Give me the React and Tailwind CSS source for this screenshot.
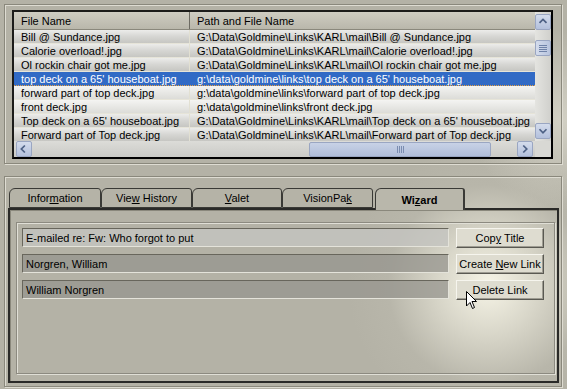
import React from 'react';

const rows = [
  { name: 'Bill @ Sundance.jpg', path: 'G:\\Data\\Goldmine\\Links\\KARL\\mail\\Bill @ Sundance.jpg' },
  { name: 'Calorie overload!.jpg', path: 'G:\\Data\\Goldmine\\Links\\KARL\\mail\\Calorie overload!.jpg' },
  { name: 'Ol rockin chair got me.jpg', path: 'G:\\Data\\Goldmine\\Links\\KARL\\mail\\Ol rockin chair got me.jpg' },
  { name: "top deck on a 65' houseboat.jpg", path: "g:\\data\\goldmine\\links\\top deck on a 65' houseboat.jpg", selected: true },
  { name: 'forward part of top deck.jpg', path: 'g:\\data\\goldmine\\links\\forward part of top deck.jpg' },
  { name: 'front deck.jpg', path: 'g:\\data\\goldmine\\links\\front deck.jpg' },
  { name: "Top deck on a 65' houseboat.jpg", path: "G:\\Data\\Goldmine\\Links\\KARL\\mail\\Top deck on a 65' houseboat.jpg" },
  { name: 'Forward part of Top deck.jpg', path: 'G:\\Data\\Goldmine\\Links\\KARL\\mail\\Forward part of Top deck.jpg' },
];

const ScrollBtn = ({ dir }) => {
  const d = {
    up: 'M4 9 L8 5 L12 9',
    down: 'M4 6 L8 10 L12 6',
    left: 'M9 4 L5 8 L9 12',
    right: 'M6 4 L10 8 L6 12',
  }[dir];
  return (
    <div className="w-[16px] h-[16px] rounded-[2px] border border-[#9aa6c2] bg-gradient-to-b from-[#d4dcec] to-[#b3c0dc] flex items-center justify-center">
      <svg width="16" height="16" viewBox="0 0 16 16">
        <path d={d} fill="none" stroke="#4d6185" strokeWidth="2" />
      </svg>
    </div>
  );
};

const Tab = ({ children, active, w }) => (
  <div
    className={`${w} flex items-center justify-center border border-[#3a3a36] rounded-tl-[6px] rounded-tr-[3px] ${
      active
        ? 'h-[22px] -mb-[2px] border-b-0 border-r-2 bg-[#b9b7ab] font-bold z-10 relative'
        : 'h-[20px] bg-[#b5b3a7] mt-0'
    }`}
  >
    {children}
  </div>
);

const Field = ({ children, light }) => (
  <div
    className={`w-[427px] h-[19px] border border-t-[#68665c] border-l-[#68665c] border-r-[#e4e3da] border-b-[#e4e3da] flex items-center pl-[3px] ${
      light ? 'bg-[rgba(196,196,192,0.8)]' : 'bg-[rgba(150,148,142,0.75)]'
    }`}
  >
    {children}
  </div>
);

const Button = ({ children }) => (
  <div className="w-[88px] h-[20px] flex items-center justify-center bg-[#dedcd0] border border-t-[#f6f5ee] border-l-[#f6f5ee] border-r-[#5a5952] border-b-[#5a5952] shadow-[inset_-1px_-1px_0_#9e9c92]">
    {children}
  </div>
);

export default function App() {
  return (
    <div
      className="w-[567px] h-[389px] pt-[4px] px-[4px] relative overflow-hidden text-[11px] leading-[14px] text-black bg-[#b4b2a6]"
      style={{
        fontFamily: '"Liberation Sans", Arial, sans-serif',
        backgroundImage:
          'radial-gradient(circle at 488px 285px, rgba(250,248,234,0.95) 0px, rgba(240,238,224,0.6) 50px, rgba(200,198,186,0.2) 100px, rgba(180,178,166,0) 140px), radial-gradient(circle at 560px 120px, rgba(240,238,226,0.5) 0px, rgba(180,178,166,0) 90px)',
      }}
    >
      {/* top list frame */}
      <div className="w-[558px] h-[160px] border border-[#8a887c] shadow-[inset_1px_1px_0_#dedcd2,1px_1px_0_#dedcd2] pl-[7px] pt-[5px]">
        <div className="w-[541px] h-[149px] border-2 border-t-[#1c1c1a] border-l-[#1c1c1a] border-r-black border-b-black flex flex-col bg-[#d2d2ce]">
          <div className="flex h-[129px]">
            <div className="w-[521px] h-[129px] overflow-hidden flex flex-col">
              <div className="flex h-[18px] bg-gradient-to-b from-[#cfcdc2] to-[#b9b7ab] border-b border-[#8a887c] shrink-0">
                <div className="w-[176px] pl-[7px] flex items-center border-r border-[#6d6b62]">File Name</div>
                <div className="pl-[7px] flex items-center">Path and File Name</div>
              </div>
              {rows.map((r, i) => (
                <div
                  key={i}
                  className={`flex h-[14px] shrink-0 whitespace-nowrap ${
                    r.selected
                      ? 'bg-[#316ac5] text-white border-b border-dotted border-[#e8a040]'
                      : i === 4 || i === 5
                      ? 'bg-gradient-to-b from-[#f4f4f2] to-[#dcdcd8] border-b border-[#e6e4d8]'
                      : 'bg-gradient-to-b from-[#ececea] via-[#d6d6d3] to-[#c6c6c2] border-b border-[#e6e4d8]'
                  }`}
                >
                  <div className={`w-[176px] pl-[7px] overflow-hidden border-r ${r.selected ? 'border-[#316ac5]' : 'border-[#e2e0d2]'}`}>{r.name}</div>
                  <div className="pl-[7px]">{r.path}</div>
                </div>
              ))}
            </div>
            <div className="w-[16px] h-[129px] bg-gradient-to-r from-[#e4e4e0] to-[#d0d0cc] flex flex-col items-center pt-[2px] pb-[2px]">
              <ScrollBtn dir="up" />
              <div className="mt-[10px] w-[16px] h-[16px] rounded-[2px] border border-[#9aa6c2] bg-gradient-to-r from-[#d4dcec] to-[#b8c4de] flex flex-col items-center justify-center gap-[1px]">
                <div className="w-[8px] h-px bg-[#6f82a8]" />
                <div className="w-[8px] h-px bg-[#6f82a8]" />
                <div className="w-[8px] h-px bg-[#6f82a8]" />
                <div className="w-[8px] h-px bg-[#6f82a8]" />
              </div>
              <div className="flex-1" />
              <ScrollBtn dir="down" />
            </div>
          </div>
          <div className="flex h-[16px]">
            <div className="w-[521px] h-[16px] bg-gradient-to-b from-[#dcdcd8] to-[#cacac6] flex items-center pl-[2px]">
              <ScrollBtn dir="left" />
              <div className="w-[277px]" />
              <div className="w-[182px] h-[15px] rounded-[2px] border border-[#9aa6c2] bg-gradient-to-b from-[#c8d2e6] to-[#b0bdd9] flex items-center justify-center gap-[1px]">
                <div className="w-px h-[7px] bg-[#7a8cb0]" />
                <div className="w-px h-[7px] bg-[#7a8cb0]" />
                <div className="w-px h-[7px] bg-[#7a8cb0]" />
                <div className="w-px h-[7px] bg-[#7a8cb0]" />
              </div>
              <div className="w-[26px]" />
              <ScrollBtn dir="right" />
            </div>
            <div className="w-[16px] h-[16px] bg-[#d8d8d4]" />
          </div>
        </div>
      </div>

      {/* bottom tab frame */}
      <div className="mt-[12px] w-[558px] h-[211px] border border-[#8a887c] shadow-[inset_1px_1px_0_#dedcd2,1px_1px_0_#dedcd2] pl-[3px] pt-[11px]">
        <div className="flex items-end ml-[1px]">
          <Tab w="w-[92px]">
            <span>Infor<u>m</u>ation</span>
          </Tab>
          <Tab w="w-[91px]">
            <span>Vie<u>w</u> History</span>
          </Tab>
          <Tab w="w-[90px]">
            <span><u>V</u>alet</span>
          </Tab>
          <Tab w="w-[91px]">
            <span>VisionPa<u>k</u></span>
          </Tab>
          <div className="w-[2px]" />
          <Tab w="w-[90px]" active>
            <span>Wi<u>z</u>ard</span>
          </Tab>
        </div>
        <div className="w-[551px] h-[175px] border-2 border-[#2a2a28] shadow-[inset_1px_1px_0_#8a887c] pl-[6px] pt-[12px]">
          <div className="w-[539px] h-[152px] border border-[#8c8a80] shadow-[inset_1px_1px_0_#e0dfd6,1px_1px_0_#e0dfd6] pl-[5px] pt-[5px] flex flex-col gap-[6px]">
            <div className="flex gap-[7px] items-start">
              <Field light>E-mailed re: Fw: Who forgot to put</Field>
              <Button>
                <span>Cop<u>y</u> Title</span>
              </Button>
            </div>
            <div className="flex gap-[7px] items-start">
              <Field>Norgren, William</Field>
              <Button>
                <span>Create <u>N</u>ew Link</span>
              </Button>
            </div>
            <div className="flex gap-[7px] items-start">
              <Field>William Norgren</Field>
              <Button>
                <span>Delete Link</span>
              </Button>
            </div>
          </div>
        </div>
      </div>

      {/* mouse pointer */}
      <svg className="absolute left-[466px] top-[291px]" width="12" height="20" viewBox="0 0 12 20">
        <path d="M0.5 0.5 L0.5 15 L4 11.5 L6.5 17.5 L8.5 16.5 L6 10.5 L10.5 10.5 Z" fill="#fff" stroke="#000" strokeWidth="1" />
      </svg>
    </div>
  );
}
